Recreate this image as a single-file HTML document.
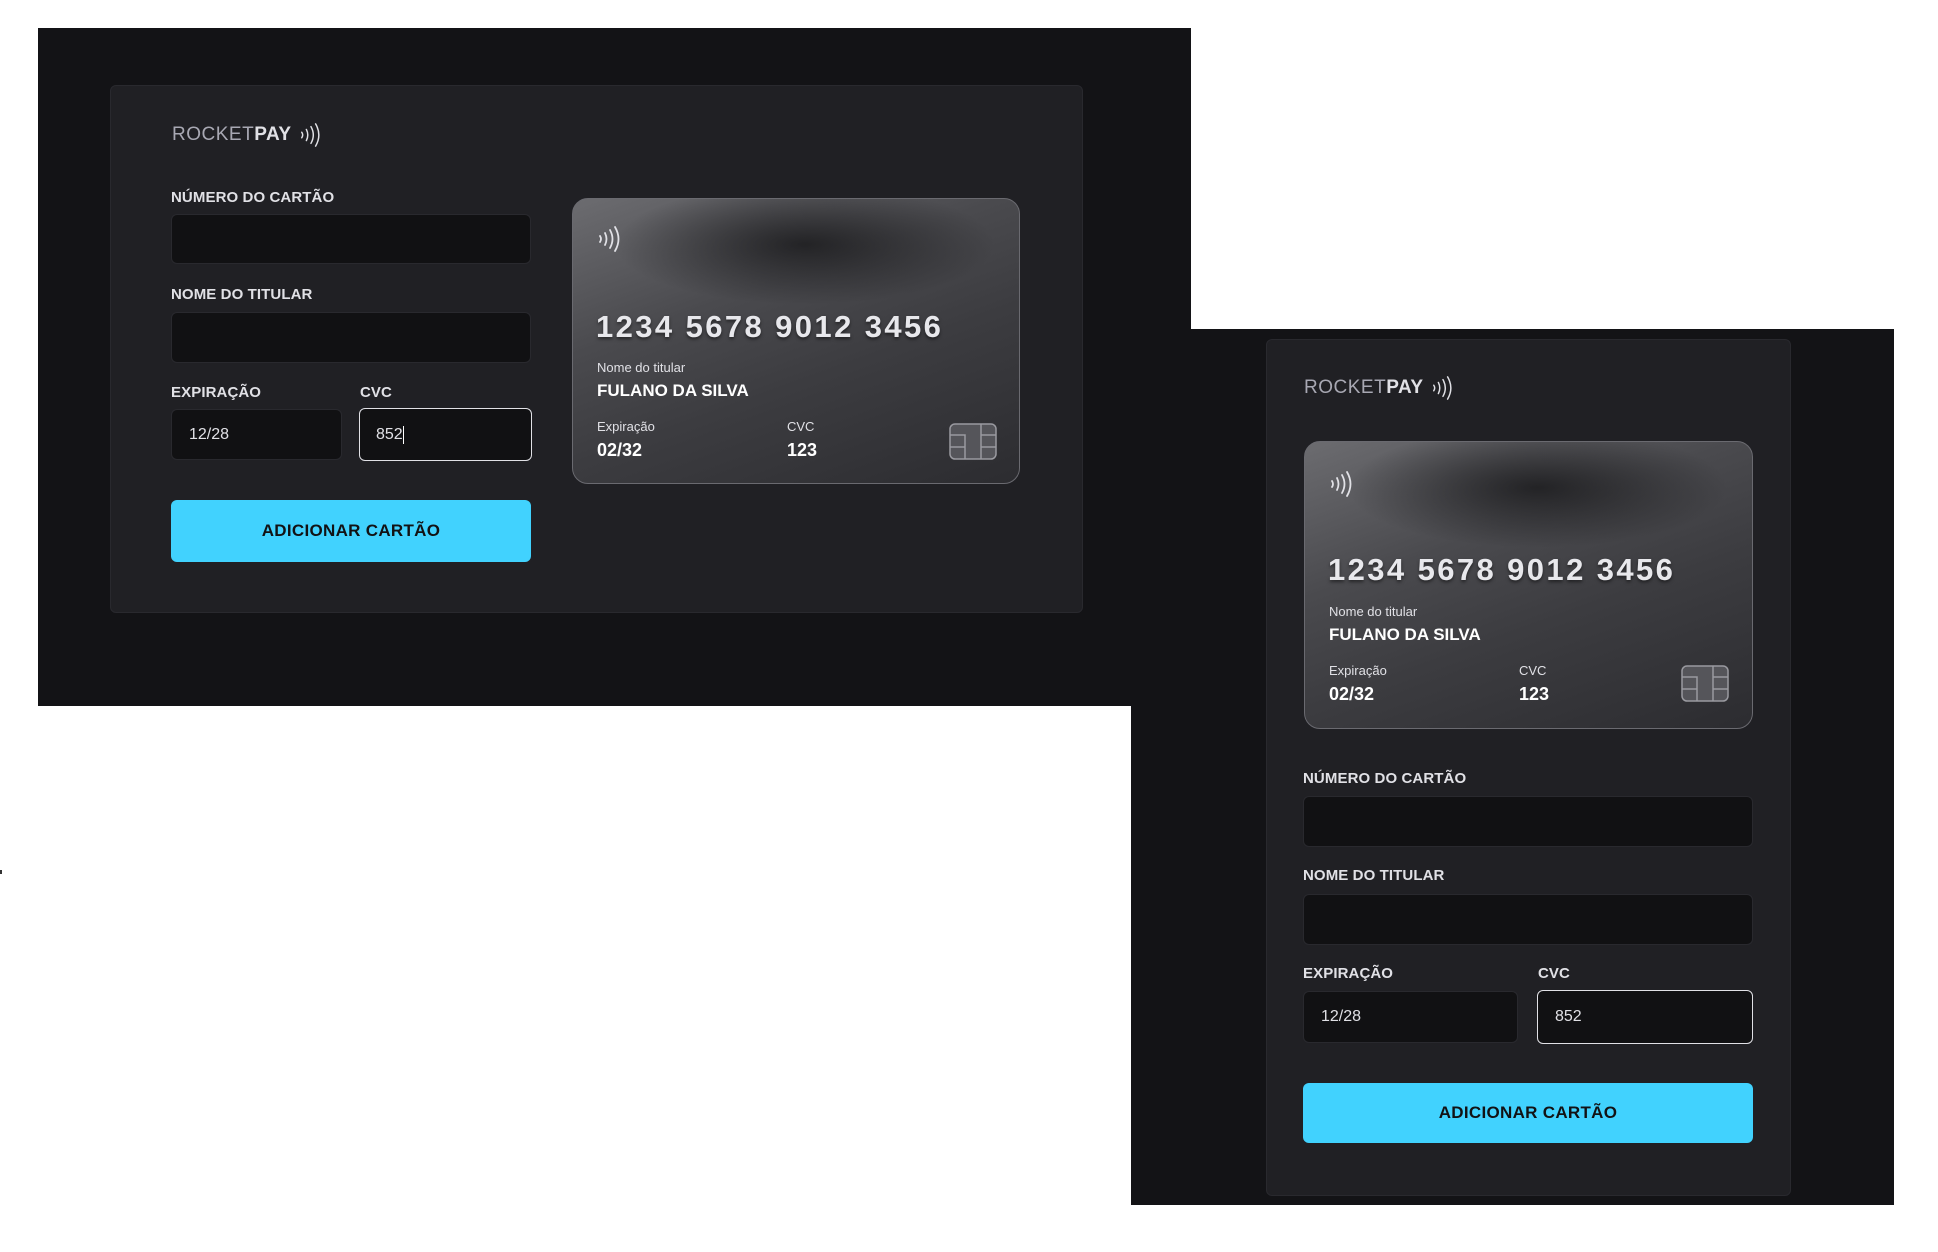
<!DOCTYPE html>
<html><head><meta charset="utf-8">
<style>
*{box-sizing:border-box;margin:0;padding:0}
body{width:1938px;height:1252px;background:#fff;position:relative;overflow:hidden;font-family:"Liberation Sans",sans-serif;color:#e1e1e6}
.abs{position:absolute}
.outer{background:#131316}
.inner{background:#202024;border:1px solid #29292e;border-radius:6px}
.logo{font-size:19px;color:#a8a8b3;letter-spacing:0.5px;display:flex;align-items:center}
.logo b{color:#e1e1e6;font-weight:700}
.lbl{font-size:15px;font-weight:700;color:#e1e1e6;letter-spacing:0.1px}
.inp{background:#111113;border:1px solid #29292e;border-radius:6px;font-size:16px;color:#e1e1e6;padding-left:17px;display:flex;align-items:center}
.inp.f{border:1.5px solid #e1e1e6}
.btn{background:#41d2fe;border-radius:6px;color:#121214;font-weight:700;font-size:17px;display:flex;align-items:center;justify-content:center;letter-spacing:0.3px}
.card{border-radius:16px;border:1.5px solid #6a6a70;background:
radial-gradient(ellipse 190px 60px at 52% 16%,rgba(20,20,22,0.75),rgba(20,20,22,0) 100%),
linear-gradient(160deg,#6c6c70 0%,#4a4a4e 35%,#3c3c40 60%,#2c2c30 100%);overflow:hidden}
.card .num{position:absolute;font-size:31px;font-weight:700;color:#e8e8ec;letter-spacing:2.4px;text-shadow:0 2px 3px rgba(0,0,0,0.5);white-space:nowrap}
.card .s{position:absolute;font-size:13px;color:#e1e1e6}
.card .b{position:absolute;font-size:17px;font-weight:700;color:#fff;white-space:nowrap}
.card .e{position:absolute;font-size:18px;font-weight:700;color:#fff}
</style></head><body>

<div class="abs outer" style="left:1131px;top:329px;width:763px;height:876px"></div>
<div class="abs" style="left:1131px;top:328px;width:60px;height:1px;background:#ddd"></div>
<div class="abs outer" style="left:38px;top:28px;width:1153px;height:678px"></div>

<!-- Panel 1 -->
<div class="abs inner" style="left:110px;top:85px;width:973px;height:528px"></div>
<div class="abs logo" style="left:172px;top:122px">ROCKET<b>PAY</b>
<svg width="24" height="26" viewBox="0 0 26 26" style="margin-left:7px" fill="none" stroke="#e1e1e6" stroke-width="1.6" stroke-linecap="round"><path d="M3 10q2 3 0 6M8 7q3 6 0 12M13 4q5 9 0 18M18 1q7 12 0 24"/></svg></div>
<div class="abs lbl" style="left:171px;top:189px">NÚMERO DO CARTÃO</div>
<div class="abs inp" style="left:171px;top:214px;width:360px;height:50px"></div>
<div class="abs lbl" style="left:171px;top:286px">NOME DO TITULAR</div>
<div class="abs inp" style="left:171px;top:312px;width:360px;height:51px"></div>
<div class="abs lbl" style="left:171px;top:384px">EXPIRAÇÃO</div>
<div class="abs lbl" style="left:360px;top:384px">CVC</div>
<div class="abs inp" style="left:171px;top:409px;width:171px;height:51px">12/28</div>
<div class="abs inp f" style="left:359px;top:408px;width:173px;height:53px;padding-left:16px">852<span style="display:inline-block;width:1px;height:18px;background:#fff"></span></div>
<div class="abs btn" style="left:171px;top:500px;width:360px;height:62px">ADICIONAR CARTÃO</div>

<div class="abs card" style="left:572px;top:198px;width:448px;height:286px">
<svg class="abs" style="left:24px;top:26px" width="26" height="28" viewBox="0 0 26 28" fill="none" stroke="#e1e1e6" stroke-width="1.8" stroke-linecap="round"><path d="M3 11q2 3 0 6M8 8q3 6 0 12M13 5q5 9 0 18M18 2q7 12 0 24"/></svg>
<div class="num" style="left:23px;top:110px">1234 5678 9012 3456</div>
<div class="s" style="left:24px;top:161px">Nome do titular</div>
<div class="b" style="left:24px;top:182px">FULANO DA SILVA</div>
<div class="s" style="left:24px;top:220px">Expiração</div>
<div class="s" style="left:214px;top:220px">CVC</div>
<div class="e" style="left:24px;top:241px">02/32</div>
<div class="e" style="left:214px;top:241px">123</div>
<svg class="abs" style="left:376px;top:224px" width="48" height="37" viewBox="0 0 48 37" fill="none" stroke="#9a9aa0" stroke-width="1.5"><rect x="1" y="1" width="46" height="35" rx="5" fill="#55555a"/><path d="M1 12h15v24M1 24h15M47 12h-15M47 24h-15M32 1v35"/></svg>
</div>

<!-- Panel 2 -->
<div class="abs inner" style="left:1266px;top:339px;width:525px;height:857px"></div>
<div class="abs logo" style="left:1304px;top:375px">ROCKET<b>PAY</b>
<svg width="24" height="26" viewBox="0 0 26 26" style="margin-left:7px" fill="none" stroke="#e1e1e6" stroke-width="1.6" stroke-linecap="round"><path d="M3 10q2 3 0 6M8 7q3 6 0 12M13 4q5 9 0 18M18 1q7 12 0 24"/></svg></div>

<div class="abs card" style="left:1304px;top:441px;width:449px;height:288px">
<svg class="abs" style="left:24px;top:28px" width="26" height="28" viewBox="0 0 26 28" fill="none" stroke="#e1e1e6" stroke-width="1.8" stroke-linecap="round"><path d="M3 11q2 3 0 6M8 8q3 6 0 12M13 5q5 9 0 18M18 2q7 12 0 24"/></svg>
<div class="num" style="left:23px;top:110px">1234 5678 9012 3456</div>
<div class="s" style="left:24px;top:162px">Nome do titular</div>
<div class="b" style="left:24px;top:183px">FULANO DA SILVA</div>
<div class="s" style="left:24px;top:221px">Expiração</div>
<div class="s" style="left:214px;top:221px">CVC</div>
<div class="e" style="left:24px;top:242px">02/32</div>
<div class="e" style="left:214px;top:242px">123</div>
<svg class="abs" style="left:376px;top:223px" width="48" height="37" viewBox="0 0 48 37" fill="none" stroke="#9a9aa0" stroke-width="1.5"><rect x="1" y="1" width="46" height="35" rx="5" fill="#55555a"/><path d="M1 12h15v24M1 24h15M47 12h-15M47 24h-15M32 1v35"/></svg>
</div>

<div class="abs lbl" style="left:1303px;top:770px">NÚMERO DO CARTÃO</div>
<div class="abs inp" style="left:1303px;top:796px;width:450px;height:51px"></div>
<div class="abs lbl" style="left:1303px;top:867px">NOME DO TITULAR</div>
<div class="abs inp" style="left:1303px;top:894px;width:450px;height:51px"></div>
<div class="abs lbl" style="left:1303px;top:965px">EXPIRAÇÃO</div>
<div class="abs lbl" style="left:1538px;top:965px">CVC</div>
<div class="abs inp" style="left:1303px;top:991px;width:215px;height:52px">12/28</div>
<div class="abs inp f" style="left:1537px;top:990px;width:216px;height:54px">852</div>
<div class="abs btn" style="left:1303px;top:1083px;width:450px;height:60px">ADICIONAR CARTÃO</div>

<div class="abs" style="left:0;top:870px;width:2px;height:4px;background:#333"></div>
</body></html>
